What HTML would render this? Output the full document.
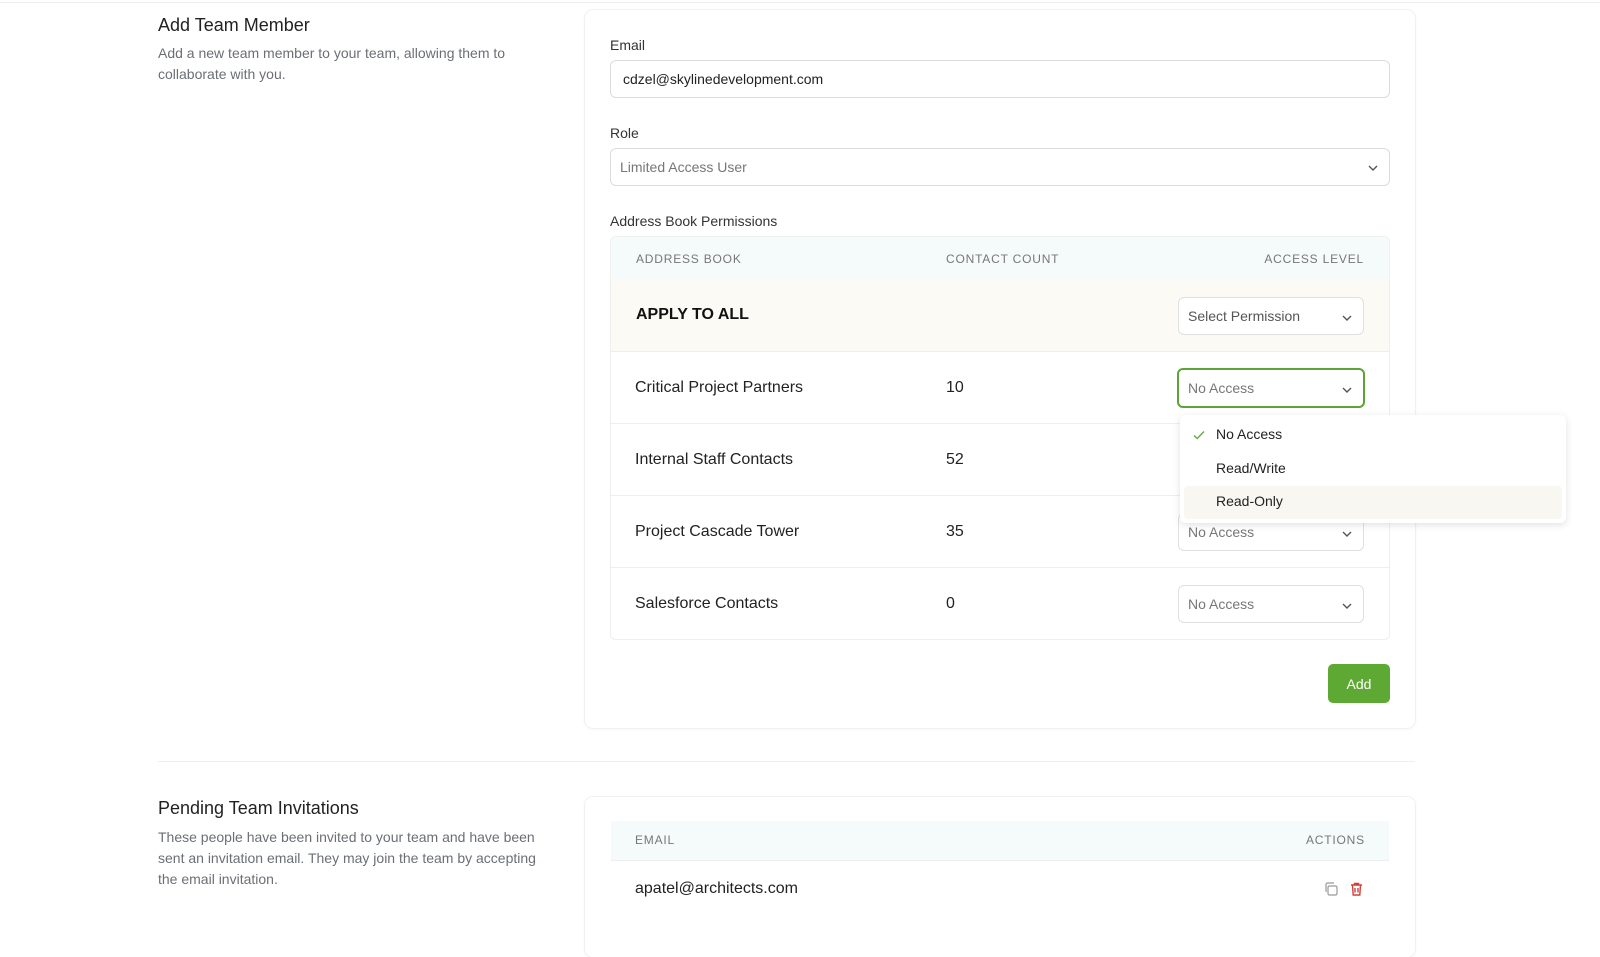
<!DOCTYPE html>
<html><head><meta charset="utf-8"><style>
*{box-sizing:border-box;margin:0;padding:0}
body{width:1600px;height:938px;background:#fff;font-family:"Liberation Sans",sans-serif;color:#1f2328;position:relative;overflow:hidden}
.a{position:absolute}
.topline{left:0;top:2px;width:1600px;height:1px;background:#ececec}
h2{font-weight:400;font-size:18px;color:#222}
.desc{font-size:14px;color:#6b6f75;line-height:21px}
.card{background:#fff;border-radius:8px;box-shadow:0 0 0 1px #f1f1f1,0 1px 4px rgba(0,0,0,.05)}
.lbl{font-size:14px;color:#333}
.inp{border:1px solid #dcdcdc;border-radius:6px;height:38px;font-size:14px;display:flex;align-items:center;padding:0 12px}
.th{font-size:12px;color:#777;letter-spacing:.8px}
.row{left:611px;width:778px;height:72px;border-top:1px solid #eee;display:flex;align-items:center}
.row .n{position:absolute;left:24px;font-size:16px;color:#222}
.row .c{position:absolute;left:335px;font-size:16px;color:#222}
.sel{position:absolute;left:567px;width:186px;height:38px;border:1px solid #e0e0e0;border-radius:6px;font-size:14px;color:#777;display:flex;align-items:center;padding:0 9px;background:#fff}
.chev{position:absolute;right:10px;top:14px}
</style></head><body>
<div class="a topline"></div>
<h2 class="a" style="left:158px;top:15px">Add Team Member</h2>
<div class="a desc" style="left:158px;top:43px;width:390px">Add a new team member to your team, allowing them to collaborate with you.</div>
<div class="a card" style="left:585px;top:10px;width:830px;height:718px"></div>
<div class="a lbl" style="left:610px;top:37px">Email</div>
<div class="a inp" style="left:610px;top:60px;width:780px;color:#222">cdzel@skylinedevelopment.com</div>
<div class="a lbl" style="left:610px;top:125px">Role</div>
<div class="a inp" style="left:610px;top:148px;width:780px;color:#777;padding-left:9px">Limited Access User
<svg class="a" style="right:10px;top:13px" width="12" height="12" viewBox="0 0 12 12"><path d="M2 4l4 4 4-4" fill="none" stroke="#555" stroke-width="1.4"/></svg></div>
<div class="a lbl" style="left:610px;top:213px">Address Book Permissions</div>
<div class="a" style="left:610px;top:236px;width:780px;height:404px;border:1px solid #eee;border-radius:6px;overflow:hidden">
 <div class="a" style="left:0;top:0;width:780px;height:43px;background:#f5fafa"></div>
 <div class="a th" style="left:25px;top:15px">ADDRESS BOOK</div>
 <div class="a th" style="left:335px;top:15px">CONTACT COUNT</div>
 <div class="a th" style="right:25px;top:15px">ACCESS LEVEL</div>
 <div class="a" style="left:0;top:43px;width:780px;height:72px;background:#fbfaf4"></div>
 <div class="a" style="left:25px;top:69px;font-size:16px;font-weight:700;color:#111">APPLY TO ALL</div>
 <div class="sel" style="top:60px;color:#555">Select Permission<svg class="chev" width="12" height="12" viewBox="0 0 12 12"><path d="M2 4l4 4 4-4" fill="none" stroke="#555" stroke-width="1.4"/></svg></div>
</div>
<div class="a row" style="top:351px"><span class="n">Critical Project Partners</span><span class="c">10</span>
 <div class="sel" style="border:2px solid #5ea336;top:16px;left:566px;width:188px;height:40px">No Access<svg class="chev" width="12" height="12" viewBox="0 0 12 12"><path d="M2 4l4 4 4-4" fill="none" stroke="#555" stroke-width="1.4"/></svg></div></div>
<div class="a row" style="top:423px"><span class="n">Internal Staff Contacts</span><span class="c">52</span></div>
<div class="a row" style="top:495px"><span class="n">Project Cascade Tower</span><span class="c">35</span>
 <div class="sel" style="top:17px">No Access<svg class="chev" width="12" height="12" viewBox="0 0 12 12"><path d="M2 4l4 4 4-4" fill="none" stroke="#555" stroke-width="1.4"/></svg></div></div>
<div class="a row" style="top:567px"><span class="n">Salesforce Contacts</span><span class="c">0</span>
 <div class="sel" style="top:17px">No Access<svg class="chev" width="12" height="12" viewBox="0 0 12 12"><path d="M2 4l4 4 4-4" fill="none" stroke="#555" stroke-width="1.4"/></svg></div></div>
<div class="a" style="left:1180px;top:415px;width:386px;height:108px;background:#fff;border-radius:6px;box-shadow:0 2px 8px rgba(0,0,0,.12);overflow:hidden">
 <div class="a" style="left:4px;top:71px;width:378px;height:33px;background:#f8f7f2;border-radius:4px"></div>
 <svg class="a" style="left:12px;top:13px" width="14" height="14" viewBox="0 0 14 14"><path d="M2 7.5l3.2 3L12 3.5" fill="none" stroke="#6aab44" stroke-width="1.5"/></svg>
 <div class="a" style="left:36px;top:11px;font-size:14px;color:#222">No Access</div>
 <div class="a" style="left:36px;top:45px;font-size:14px;color:#222">Read/Write</div>
 <div class="a" style="left:36px;top:78px;font-size:14px;color:#222">Read-Only</div>
</div>
<div class="a" style="left:1328px;top:664px;width:62px;height:39px;background:#5ea933;border-radius:5px;color:#fff;font-size:14px;display:flex;align-items:center;justify-content:center">Add</div>
<div class="a" style="left:158px;top:761px;width:1257px;height:1px;background:#eee"></div>
<h2 class="a" style="left:158px;top:798px">Pending Team Invitations</h2>
<div class="a desc" style="left:158px;top:827px;width:400px">These people have been invited to your team and have been sent an invitation email. They may join the team by accepting the email invitation.</div>
<div class="a card" style="left:585px;top:797px;width:830px;height:160px"></div>
<div class="a" style="left:611px;top:821px;width:778px;height:39px;background:#f5fafa"></div>
<div class="a th" style="left:635px;top:833px">EMAIL</div>
<div class="a th" style="left:1306px;top:833px">ACTIONS</div>
<div class="a" style="left:611px;top:860px;width:778px;height:1px;background:#eee"></div>
<div class="a" style="left:635px;top:880px;font-size:16px;color:#222">apatel@architects.com</div>
<svg class="a" style="left:1323px;top:881px" width="16" height="16" viewBox="0 0 16 16"><rect x="5" y="5" width="9" height="9" rx="1.5" fill="none" stroke="#999" stroke-width="1.2"/><path d="M3 11V3.5A1.5 1.5 0 0 1 4.5 2H11" fill="none" stroke="#999" stroke-width="1.2"/></svg>
<svg class="a" style="left:1349px;top:881px" width="15" height="16" viewBox="0 0 15 16"><path d="M2 4h11M5.5 4V2.5h4V4M3.5 4l.7 10h6.6l.7-10M6 7v4.5M9 7v4.5" fill="none" stroke="#d0403a" stroke-width="1.4"/></svg>
</body></html>
